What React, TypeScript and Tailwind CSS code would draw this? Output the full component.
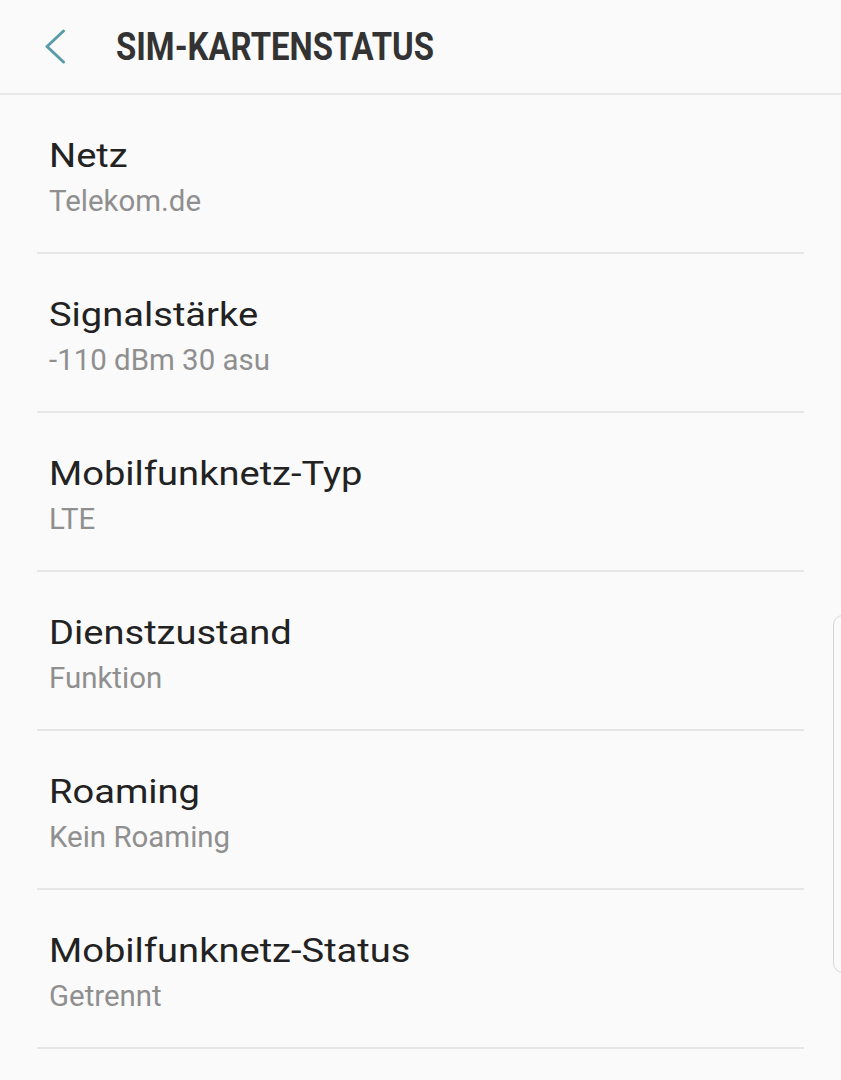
import React from "react";

const rows = [
  { t: "Netz", s: "Telekom.de" },
  { t: "Signalstärke", s: "-110 dBm 30 asu" },
  { t: "Mobilfunknetz-Typ", s: "LTE" },
  { t: "Dienstzustand", s: "Funktion" },
  { t: "Roaming", s: "Kein Roaming" },
  { t: "Mobilfunknetz-Status", s: "Getrennt" },
];

export default function App() {
  return (
    <div className="relative w-[841px] h-[1080px] overflow-hidden bg-[#fafafa] font-['Roboto',_'Liberation_Sans',_sans-serif]">
      <div className="h-[95px] flex items-center border-b-2 border-[#e8e8e8]">
        <svg width="24" height="36" viewBox="0 0 24 36" className="ml-[43px]" fill="none">
          <polyline points="20.5,2 4,17.5 20.5,33" stroke="#5a9ba8" strokeWidth="3" strokeLinecap="round" strokeLinejoin="round" />
        </svg>
        <div className="ml-[49px] text-[38px] font-bold text-[#333333] scale-x-[0.865] origin-left whitespace-nowrap mt-[2px]">
          SIM-KARTENSTATUS
        </div>
      </div>
      <div className="ml-[37px] w-[767px]">
        {rows.map((r) => (
          <div key={r.t} className="h-[159px] border-b-2 border-[#e6e6e6] pt-[40px] pl-[12px]">
            <div className="text-[34px] leading-[40px] text-[#222222] scale-x-[1.12] origin-left whitespace-nowrap">{r.t}</div>
            <div className="mt-[9px] text-[29px] leading-[34px] text-[#8f8f8f] scale-x-[1.015] origin-left whitespace-nowrap">{r.s}</div>
          </div>
        ))}
      </div>
      <div className="absolute left-[833px] top-[615px] w-[20px] h-[358px] rounded-l-[10px] border border-[#d6d6d6]" />
    </div>
  );
}
